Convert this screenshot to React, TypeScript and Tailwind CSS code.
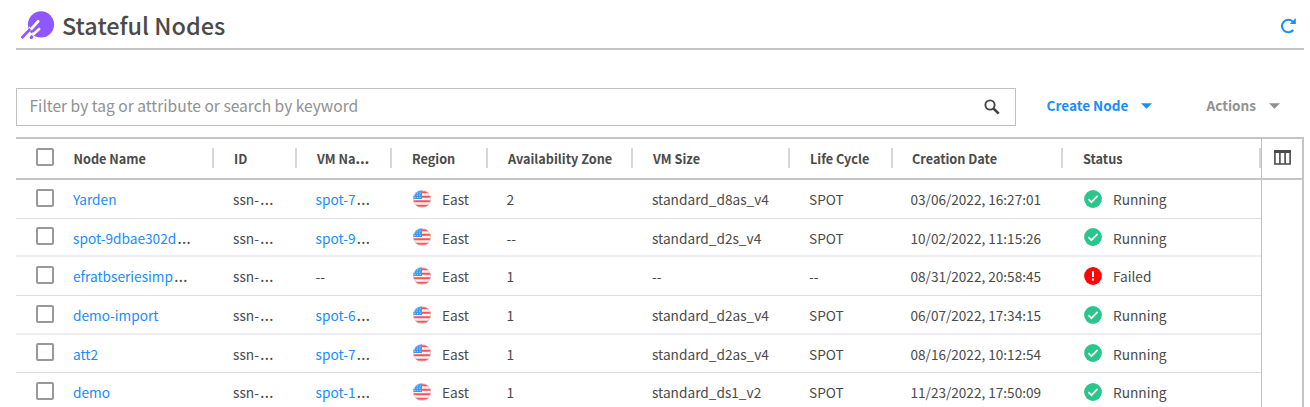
import React from "react";

const COLS = "grid grid-cols-[198px_83px_95px_96px_145px_157px_103px_170px_198px]";

type Row = {
  name: string;
  cut?: boolean;
  vm: string | null;
  zone: string;
  size: string;
  life: string;
  date: string;
  failed?: boolean;
  frame: string;
};

const rows: Row[] = [
  { name: "Yarden", vm: "spot-7", zone: "2", size: "standard_d8as_v4", life: "SPOT", date: "03/06/2022, 16:27:01", frame: "h-[39px] border-b border-[#dcdee6]" },
  { name: "spot-9dbae302d", cut: true, vm: "spot-9", zone: "--", size: "standard_d2s_v4", life: "SPOT", date: "10/02/2022, 11:15:26", frame: "h-[38px] border-b-2 border-[#eceef4] pt-px" },
  { name: "efratbseriesimp", cut: true, vm: null, zone: "1", size: "--", life: "--", date: "08/31/2022, 20:58:45", failed: true, frame: "h-[39px] border-b border-[#dcdee6]" },
  { name: "demo-import", vm: "spot-6", zone: "1", size: "standard_d2as_v4", life: "SPOT", date: "06/07/2022, 17:34:15", frame: "h-[39px] border-b-2 border-[#eceef4] pt-px" },
  { name: "att2", vm: "spot-7", zone: "1", size: "standard_d2as_v4", life: "SPOT", date: "08/16/2022, 10:12:54", frame: "h-[38px] border-b border-[#dcdee6]" },
  { name: "demo", vm: "spot-1", zone: "1", size: "standard_ds1_v2", life: "SPOT", date: "11/23/2022, 17:50:09", frame: "h-[38px]" },
];

const HeadDots = () => <span className="font-['Open_Sans'] text-[16px] leading-none">…</span>;

const Dots = () => (
  <span className="ml-px font-['Open_Sans'] text-[17.5px] leading-none text-[#4a4a4a]">…</span>
);

const Logo = () => (
  <svg className="h-7 w-[34px]" viewBox="0 0 34 28">
    <circle cx="20" cy="13.4" r="13.1" fill="#8f57ff" />
    <g strokeLinecap="round" fill="none">
      <path d="M10.6 17.6 17.2 10.3" stroke="#fff" strokeWidth="2.8" />
      <path d="M12.6 23 18.2 18" stroke="#fff" strokeWidth="2.6" />
      <path d="M8.2 16.2 10.2 18.4 8.6 20" stroke="#fff" strokeWidth="1.4" />
      <path d="M8.4 25.6 11.6 22.4" stroke="#fff" strokeWidth="1.6" />
      <path d="M1.4 26.2 8.4 18.9" stroke="#8f57ff" strokeWidth="2.8" />
      <path d="M10.3 26.3 10.6 26" stroke="#8f57ff" strokeWidth="3.2" />
    </g>
  </svg>
);

const Refresh = () => (
  <svg className="h-[17px] w-[17px]" viewBox="0 0 17 17">
    <path d="M13.2 13A6.3 6.3 0 1 1 12.6 4.4" fill="none" stroke="#1a8cff" strokeWidth="2.1" />
    <path d="M15.8 1v6H9.8z" fill="#1a8cff" />
  </svg>
);

const Search = () => (
  <svg className="h-4 w-4" viewBox="0 0 16 16" fill="none" stroke="#444">
    <circle cx="6" cy="6" r="4.6" strokeWidth="1.9" />
    <path d="m9.5 9.5 5.2 5.2" strokeWidth="2.6" />
  </svg>
);

const Caret = () => (
  <svg className="h-[6px] w-[11px]" viewBox="0 0 12 6" fill="currentColor">
    <path d="M0 0h12L6 6z" />
  </svg>
);

const Columns = () => (
  <svg className="h-[15px] w-[17px]" viewBox="0 0 17 15" fill="none" stroke="#4a4a4a">
    <path d="M.9 1v13h15.2V1M5.9 2v12M11.1 2v12" strokeWidth="1.6" />
    <path d="M0 1.5h17" strokeWidth="3" />
  </svg>
);

const Flag = () => (
  <svg className="mb-px h-[18px] w-[18px]" viewBox="0 0 18 18">
    <defs>
      <clipPath id="disc">
        <circle cx="9" cy="9" r="8.8" />
      </clipPath>
    </defs>
    <g clipPath="url(#disc)">
      <path fill="#f5f3f3" d="M0 0h18v18H0z" />
      <path stroke="#ff5057" strokeWidth="2" d="M0 2.2h18M0 6.8h18M0 11.3h18M0 15.7h18" />
      <path fill="#3399ff" d="M0 0h9v9H0z" />
      <path stroke="#d9ecff" strokeWidth=".9" strokeDasharray="1 1.6" d="M1.5 3h7M1 5.2h8M1.5 7.4h7" />
    </g>
    <circle cx="9" cy="9" r="8.5" fill="none" stroke="#c8c0c2" strokeWidth=".6" />
  </svg>
);

const StatusIcon = ({ failed }: { failed?: boolean }) => (
  <svg className="mb-px h-[18px] w-[18px]" viewBox="0 0 18 18">
    <circle cx="9" cy="9" r="8.9" fill={failed ? "#ff0505" : "#28c68a"} />
    {failed ? (
      <path d="M9 4.3v5.6M9 11.5v2" stroke="#fff" strokeWidth="2" />
    ) : (
      <path d="m4.4 9.2 3 3 6.2-6.4" fill="none" stroke="#fff" strokeWidth="1.7" />
    )}
  </svg>
);

const Box = () => <span className="mb-[3px] ml-5 h-[18px] w-[18px] shrink-0 rounded-[2px] border-2 border-[#999]" />;

const Head = ({ children }: { children: React.ReactNode }) => (
  <div className="flex items-center">
    <span className="flex-1 whitespace-nowrap pl-5 leading-5">{children}</span>
    <span className="mb-[2px] h-5 w-[2px] bg-[#d6d6d8]" />
  </div>
);

export default function App() {
  return (
    <div className="h-[407px] overflow-hidden bg-white pl-4 font-['Noto_Sans_CJK_SC',sans-serif] text-[#4a4a4a]">
      <header className="flex h-[50px] w-[1288px] items-center border-b-2 border-[#c4c4c4]">
        <div className="ml-[5px] flex items-center gap-[7px]">
          <div className="pt-[2px]">
            <Logo />
          </div>
          <h1 className="pt-[2px] text-[23.45px] font-medium leading-8">Stateful Nodes</h1>
        </div>
        <div className="ml-auto mr-[7px] mt-[3px]">
          <Refresh />
        </div>
      </header>

      <div className="mt-[38px] flex h-[38px] items-center">
        <div className="flex h-[38px] w-[1000px] items-center justify-between border border-[#c0c0c0] pl-[12.5px] pr-[15px]">
          <span className="pb-[4px] text-[15.58px] leading-6 text-[#919191]">Filter by tag or attribute or search by keyword</span>
          <Search />
        </div>
        <button className="mb-[4px] ml-[30.5px] flex items-center gap-[13px] text-[13.6px] font-bold leading-5 text-[#1a8cff]">
          Create Node <span className="pt-[2px]"><Caret /></span>
        </button>
        <button className="mb-[4px] ml-[54px] flex items-center gap-[13px] text-[13.6px] font-bold leading-5 text-[#919191]">
          Actions <span className="pt-[2px]"><Caret /></span>
        </button>
      </div>

      <div className="mt-[11px] flex h-[280px] w-[1288px] border-t-2 border-r-2 border-[#c4c4c4]">
        <div className="w-[1245px]">
          <div className={`${COLS} h-[41px] border-b-2 border-[#c4c4c4] text-[12.7px] font-bold`}>
            <div className="flex items-center">
              <Box />
              <span className="ml-[19.5px] flex-1 leading-5">Node Name</span>
              <span className="mb-[2px] h-5 w-[2px] bg-[#d6d6d8]" />
            </div>
            <Head>ID</Head>
            <Head>VM Na<HeadDots /></Head>
            <Head>Region</Head>
            <Head>Availability Zone</Head>
            <Head>VM Size</Head>
            <Head>Life Cycle</Head>
            <Head><span className="-ml-px">Creation Date</span></Head>
            <Head>Status</Head>
          </div>
          {rows.map((r) => (
            <div key={r.date} className={`${COLS} ${r.frame} items-center whitespace-nowrap text-[13.68px] leading-5`}>
              <div className="flex items-center">
                <Box />
                <span className="ml-[19px] text-[#1a8cff]">
                  {r.name}
                  {r.cut && <Dots />}
                </span>
              </div>
              <div className="pl-[19px]">ssn-<Dots /></div>
              <div className="pl-[18.5px]">
                {r.vm ? <span className="text-[#1a8cff]">{r.vm}<Dots /></span> : "--"}
              </div>
              <div className="flex items-center gap-[11px] pl-[21px]">
                <Flag /> East
              </div>
              <div className="pl-[18.5px]">{r.zone}</div>
              <div className="pl-[19px]">{r.size}</div>
              <div className="pl-[19px]">{r.life}</div>
              <div className="pl-[17.5px] text-[13.58px]">{r.date}</div>
              <div className="flex items-center gap-[11px] pl-[21px]">
                <StatusIcon failed={r.failed} />
                {r.failed ? "Failed" : "Running"}
              </div>
            </div>
          ))}
        </div>
        <div className="flex-1 border-l border-[#c0c0c0]">
          <div className="flex h-[41px] items-center justify-center border-b-2 border-[#c4c4c4] pb-[2px]">
            <Columns />
          </div>
        </div>
      </div>
    </div>
  );
}
